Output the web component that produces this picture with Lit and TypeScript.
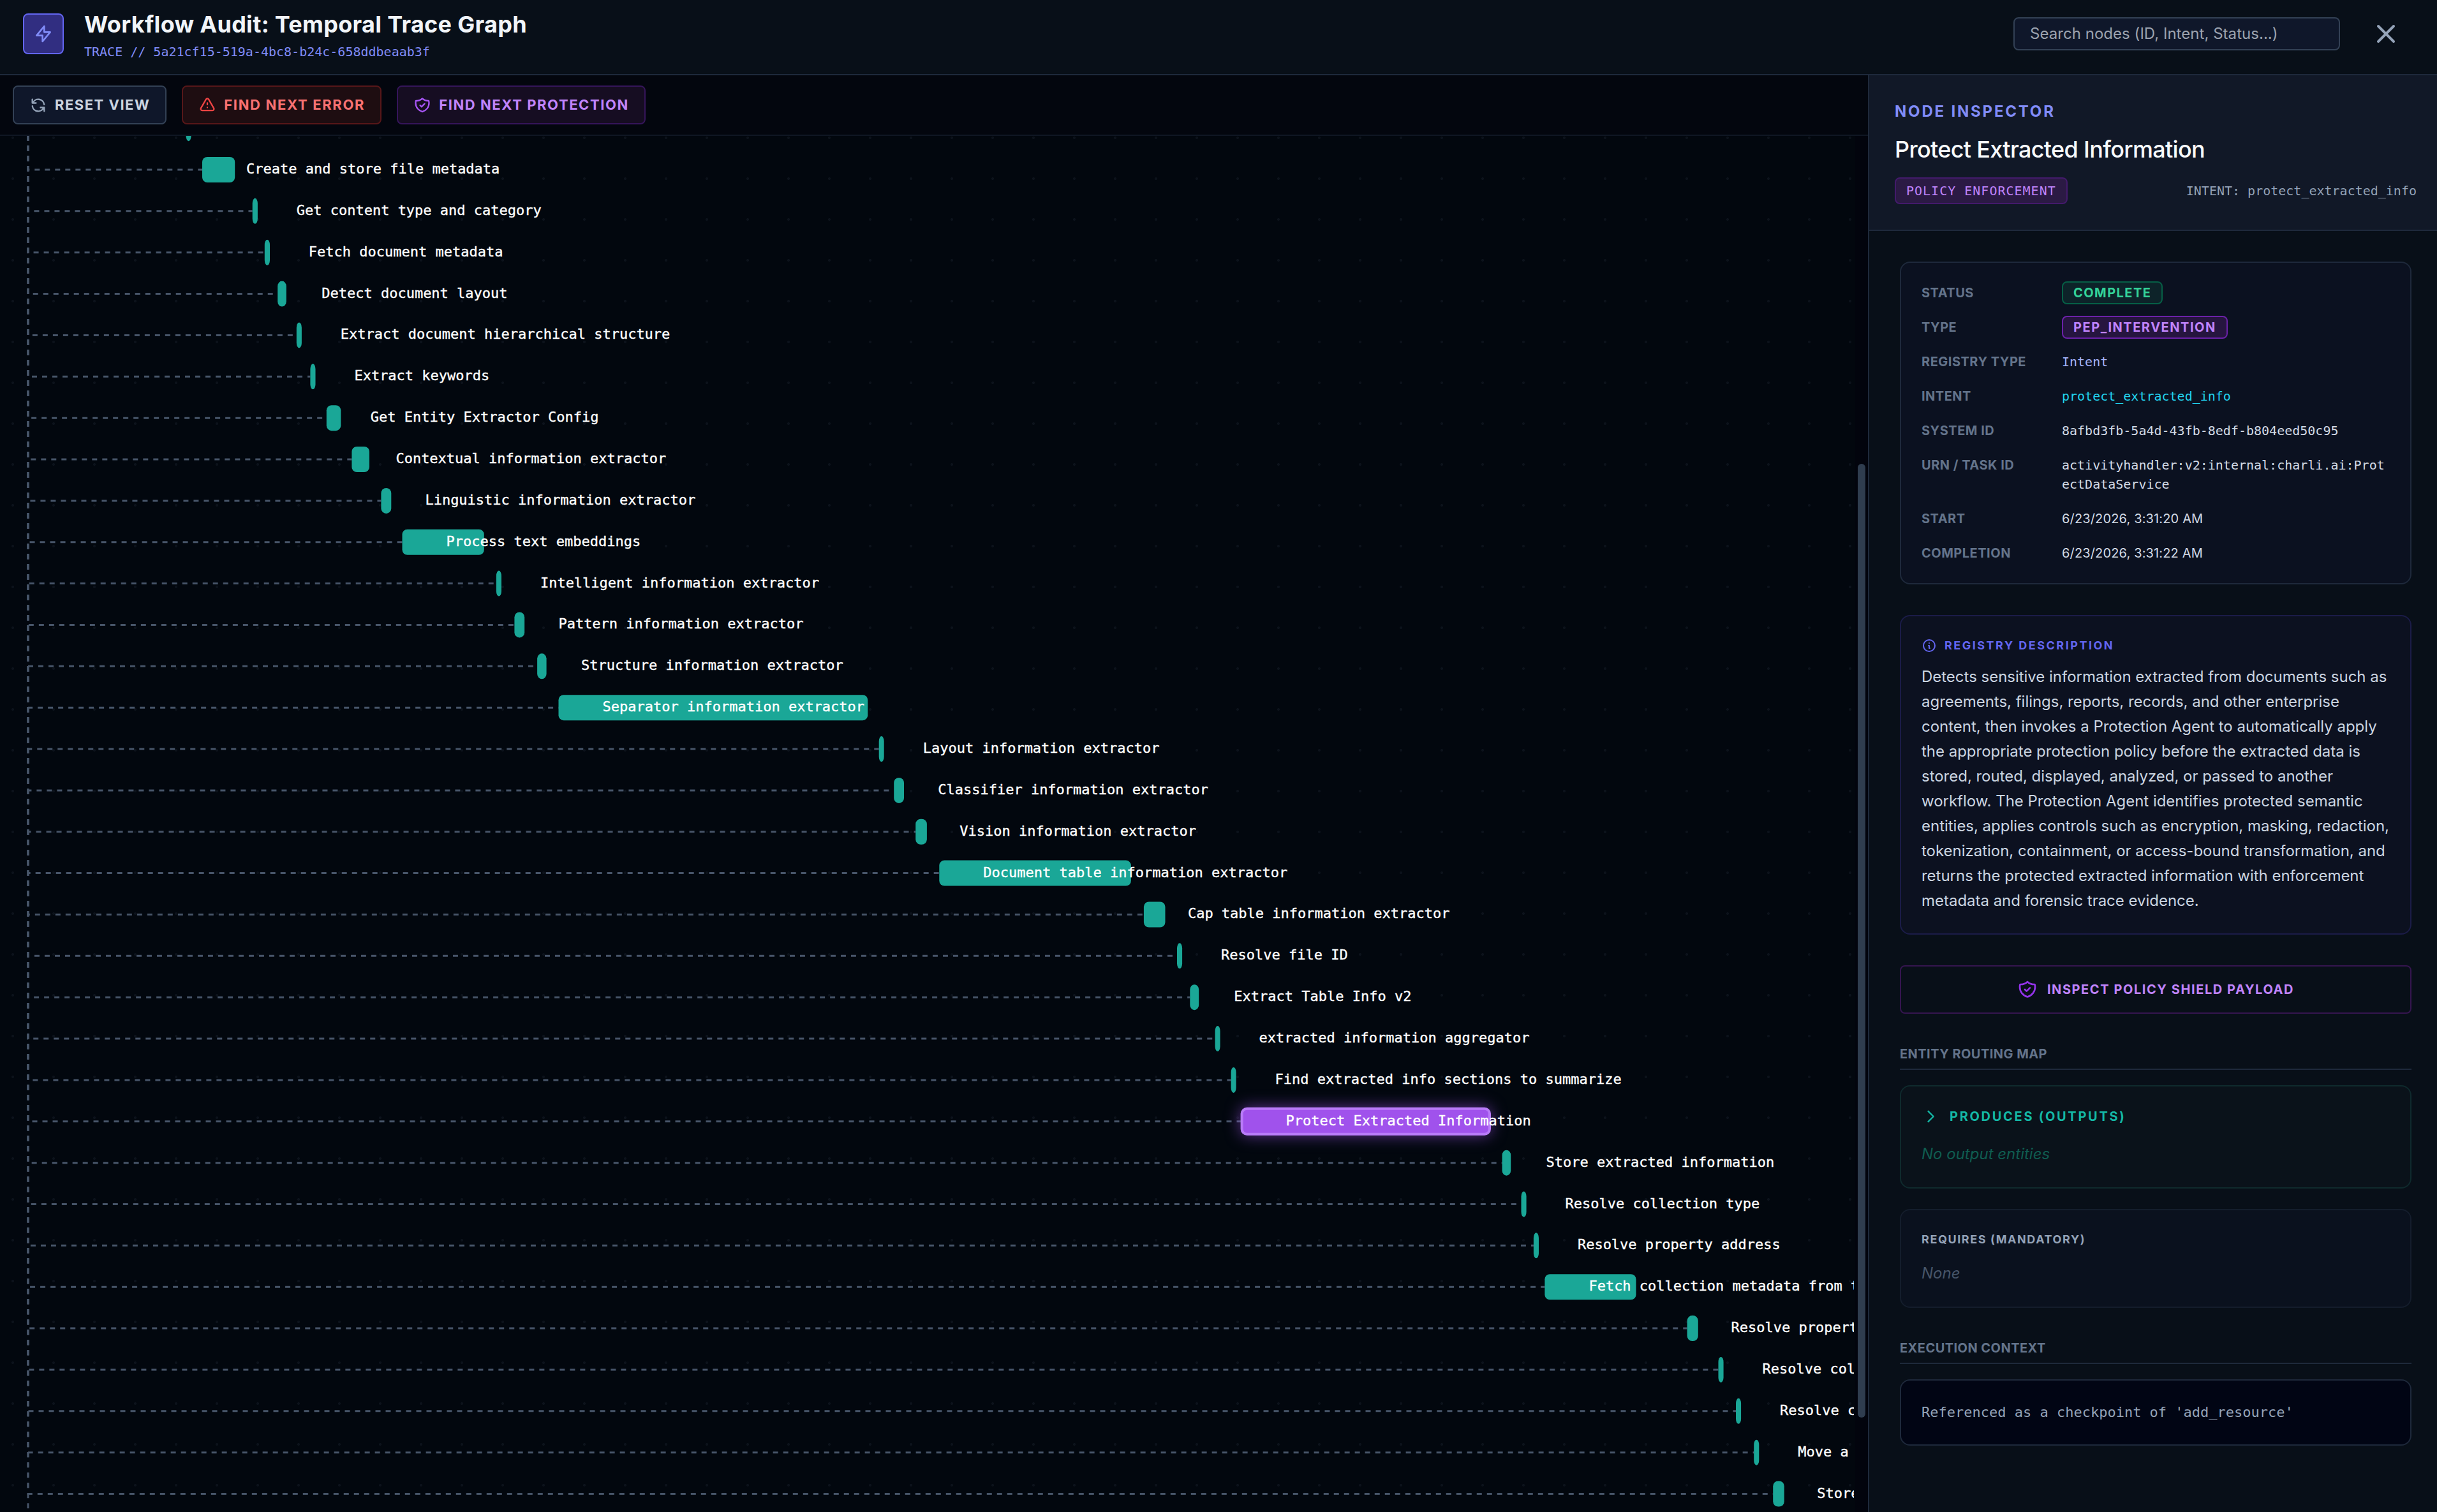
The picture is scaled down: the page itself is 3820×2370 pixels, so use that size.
import { LitElement, html, svg, css } from "lit";
import { customElement } from "lit/decorators.js";

const PATHS = {
  bolt: "M13 10V3L4 14h7v7l9-11h-7z",
  close: "M6 18L18 6M6 6l12 12",
  refresh:
    "M4 4v5h.582m15.356 2A8.001 8.001 0 004.582 9m0 0H9m11 11v-5h-.581m0 0a8.003 8.003 0 01-15.357-2m15.357 2H15",
  warning:
    "M12 9v2m0 4h.01m-6.938 4h13.856c1.54 0 2.502-1.667 1.732-3L13.732 4c-.77-1.333-2.694-1.333-3.464 0L3.34 16c-.77 1.333.192 3 1.732 3z",
  shield:
    "M9 12l2 2 4-4m5.618-4.016A11.955 11.955 0 0112 2.944a11.955 11.955 0 01-8.618 3.04A12.02 12.02 0 003 9c0 5.591 3.824 10.29 9 11.622 5.176-1.332 9-6.03 9-11.622 0-1.042-.133-2.052-.382-3.016z",
  info: "M13 16h-1v-4h-1m1-4h.01M21 12a9 9 0 11-18 0 9 9 0 0118 0z",
  chevron: "M9 5l7 7-7 7",
};

const icon = (name: keyof typeof PATHS, size: number, cls = "") => html`
  <svg class="icon ${cls}" width=${size} height=${size} viewBox="0 0 24 24">
    <path d=${PATHS[name]} />
  </svg>
`;

interface TraceNode {
  label: string;
  start: number;
  end: number;
  selected?: boolean;
}

/* Nodes in execution order; start and end are canvas x positions. */
const NODES: TraceNode[] = [
  { label: "", start: 291.6, end: 299.6 },
  { label: "Create and store file metadata", start: 317, end: 368.2 },
  { label: "Get content type and category", start: 395.7, end: 403.9 },
  { label: "Fetch document metadata", start: 414.8, end: 423 },
  { label: "Detect document layout", start: 435.2, end: 448.8 },
  { label: "Extract document hierarchical structure", start: 464.8, end: 472.9 },
  { label: "Extract keywords", start: 486.4, end: 494.5 },
  { label: "Get Entity Extractor Config", start: 511.8, end: 534.3 },
  { label: "Contextual information extractor", start: 551.4, end: 579 },
  { label: "Linguistic information extractor", start: 597.4, end: 613.3 },
  { label: "Process text embeddings", start: 630.5, end: 758.8 },
  { label: "Intelligent information extractor", start: 777.9, end: 786 },
  { label: "Pattern information extractor", start: 806.4, end: 822.2 },
  { label: "Structure information extractor", start: 842.1, end: 856.6 },
  { label: "Separator information extractor", start: 875.5, end: 1360.2 },
  { label: "Layout information extractor", start: 1377.7, end: 1385.7 },
  { label: "Classifier information extractor", start: 1401.2, end: 1417 },
  { label: "Vision information extractor", start: 1435.2, end: 1452.9 },
  { label: "Document table information extractor", start: 1472.3, end: 1772.9 },
  { label: "Cap table information extractor", start: 1792.9, end: 1826.5 },
  { label: "Resolve file ID", start: 1845, end: 1853.1 },
  { label: "Extract Table Info v2", start: 1865.3, end: 1879.2 },
  { label: "extracted information aggregator", start: 1904.6, end: 1912.6 },
  { label: "Find extracted info sections to summarize", start: 1929.6, end: 1937.6 },
  { label: "Protect Extracted Information", start: 1946.6, end: 2335, selected: true },
  { label: "Store extracted information", start: 2354.6, end: 2368.2 },
  { label: "Resolve collection type", start: 2384.5, end: 2392.6 },
  { label: "Resolve property address", start: 2403.9, end: 2412 },
  { label: "Fetch collection metadata from t", start: 2421.4, end: 2564.5 },
  { label: "Resolve propert", start: 2644.6, end: 2661.8 },
  { label: "Resolve col", start: 2693.5, end: 2701.6 },
  { label: "Resolve c", start: 2721, end: 2729.1 },
  { label: "Move a", start: 2749.2, end: 2757.3 },
  { label: "Store", start: 2779.2, end: 2796.8 },
];

const ROW_PITCH = 64.86;
const FIRST_ROW_Y = 201.14;
const ROOT_X = 44;
const ROOT_Y = 196.3;
const BAR_HEIGHT = 40;

@customElement("trace-canvas")
export class TraceCanvas extends LitElement {
  static styles = css`
    :host {
      display: flex;
      flex: 1;
      min-height: 0;
      background: #02070e;
    }
    .viewport {
      flex: 1;
      min-width: 0;
      background-image: radial-gradient(circle, #0c121b 1.7px, transparent 2.3px);
      background-size: 64px 64px;
      background-position: -12px -29px;
    }
    .graph {
      display: block;
      width: 2906px;
      height: 2157px;
      overflow: hidden;
    }
    .edge {
      fill: none;
      stroke: #475569;
      stroke-width: 3;
      stroke-dasharray: 8 8;
    }
    .bar {
      fill: #1aa797;
    }
    .bar.selected {
      fill: #a052ec;
      stroke: #b97bf8;
      stroke-width: 4;
      filter: drop-shadow(0 0 12px rgba(168, 85, 247, 0.55));
    }
    .label {
      fill: #ffffff;
      stroke: #ffffff;
      stroke-width: 0.35;
      font: 22px "DejaVu Sans Mono", monospace;
    }
    .scroll {
      width: 12px;
      padding: 0 4px;
      background: #02040d;
      display: flex;
      flex-direction: column;
    }
    .above {
      height: 514px;
    }
    .thumb {
      height: 1495px;
      border-radius: 6px;
      background: #2f3d4f;
    }
  `;

  private edge(n: TraceNode, i: number) {
    const y = FIRST_ROW_Y + i * ROW_PITCH;
    return svg`<path class="edge" d="M${ROOT_X} ${ROOT_Y}V${y.toFixed(2)}H${n.start}" />`;
  }

  private node(n: TraceNode, i: number) {
    const y = FIRST_ROW_Y + i * ROW_PITCH;
    return svg`
      <rect class="bar ${n.selected ? "selected" : ""}" x=${n.start} y=${(y - BAR_HEIGHT / 2).toFixed(2)}
        width=${(n.end - n.start).toFixed(1)} height=${BAR_HEIGHT} rx="8" />
      <text class="label" x=${(n.start + 69).toFixed(1)} y=${(y + 6).toFixed(2)}>${n.label}</text>`;
  }

  render() {
    return html`
      <div class="viewport">
        <svg class="graph" viewBox="0 213 2906 2157">
          ${NODES.map((n, i) => this.edge(n, i))}
          <path class="edge" d="M${ROOT_X} ${ROOT_Y}V2380" />
          ${NODES.map((n, i) => this.node(n, i))}
        </svg>
      </div>
      <div class="scroll"><div class="above"></div><div class="thumb"></div></div>
    `;
  }
}

const iconStyles = css`
  .icon {
    display: block;
    flex: none;
    fill: none;
    stroke: currentColor;
    stroke-width: 2;
    stroke-linecap: round;
    stroke-linejoin: round;
  }
`;

@customElement("node-inspector")
export class NodeInspector extends LitElement {
  static styles = [
    iconStyles,
    css`
      :host {
        display: flex;
        flex-direction: column;
        box-sizing: border-box;
        width: 892px;
        border-left: 2px solid #1e293b;
        background: #080f18;
        font: 20px/30px Inter, sans-serif;
      }
      .mono {
        font-family: "DejaVu Sans Mono", monospace;
      }
      .top {
        padding: 41px 32px 40px 40px;
        border-bottom: 2px solid #1e293b;
        background: #111827;
      }
      .kicker {
        font-size: 24px;
        line-height: 32px;
        font-weight: 700;
        letter-spacing: 2.8px;
        color: #818cf8;
      }
      .title {
        margin: 16px 0 17px;
        font-size: 36px;
        line-height: 54px;
        font-weight: 500;
        letter-spacing: -0.68px;
        color: #f8fafc;
      }
      .meta {
        display: flex;
        justify-content: space-between;
        align-items: center;
        color: #94a3b8;
      }
      .policy {
        padding: 4px 16px;
        border: 2px solid #431a6b;
        border-radius: 8px;
        background: #2b1a44;
        color: #c084fc;
        letter-spacing: 1px;
      }
      .body {
        display: flex;
        flex-direction: column;
        padding: 48px 40px 0 48px;
      }
      .card {
        padding: 32px;
        border: 2px solid #1e293b;
        border-radius: 16px;
        background: #0b1120;
      }
      .details {
        display: grid;
        grid-template-columns: 220px 1fr;
        row-gap: 24px;
      }
      .key {
        font-weight: 700;
        letter-spacing: 0.5px;
        color: #64748b;
      }
      .value {
        color: #d3dbe6;
        word-break: break-all;
      }
      .date {
        letter-spacing: 0.15px;
      }
      .registry-type {
        color: #a5b4fc;
      }
      .intent {
        color: #22d3ee;
      }
      .cell {
        display: flex;
        align-items: center;
        height: 30px;
      }
      .tag {
        padding: 1px 16px;
        border: 2px solid #065f46;
        border-radius: 8px;
        background: #0d2329;
        color: #34d399;
        font-weight: 700;
        letter-spacing: 1.45px;
      }
      .tag.pep {
        border-color: #6b21a8;
        background: #26153f;
        color: #c084fc;
        letter-spacing: 1.53px;
      }
      .description {
        margin-top: 48px;
        border-color: #1b1c48;
        background: #0c1120;
      }
      .card-head {
        display: flex;
        align-items: center;
        gap: 12px;
        height: 27px;
        margin-bottom: 16px;
        font-size: 18px;
        font-weight: 700;
        letter-spacing: 2.5px;
        color: #6366f1;
      }
      .copy {
        margin: 0 -8px 0 0;
        font-size: 24px;
        line-height: 39px;
        letter-spacing: -0.02px;
        color: #cbd5e1;
      }
      .inspect {
        display: flex;
        justify-content: center;
        align-items: center;
        gap: 15px;
        height: 72px;
        margin-top: 48px;
        border: 2px solid #35154f;
        border-radius: 8px;
        font-weight: 700;
        letter-spacing: 1.57px;
        color: #c084fc;
      }
      .inspect .icon {
        color: #9333ea;
      }
      .section {
        margin: 48px 0 24px;
        padding-bottom: 8px;
        border-bottom: 2px solid #1e293b;
        font-weight: 700;
        letter-spacing: 0.45px;
        color: #64748b;
      }
      .produces {
        padding-bottom: 33px;
        border-color: #0f2a2d;
        background: #0a121a;
      }
      .produces .toggle {
        display: flex;
        align-items: center;
        gap: 16px;
        margin-bottom: 24px;
        font-weight: 700;
        letter-spacing: 2.7px;
        color: #14b8a6;
      }
      .empty {
        font-size: 24px;
        line-height: 39px;
        font-style: italic;
        color: #475569;
      }
      .produces .empty {
        color: #0f5c50;
      }
      .requires {
        margin-top: 32px;
        padding-bottom: 33px;
        border-color: #141d2c;
        background: #0a111e;
      }
      .requires .name {
        margin-bottom: 20px;
        font-size: 18px;
        line-height: 27px;
        font-weight: 700;
        letter-spacing: 1.58px;
        color: #94a3b8;
      }
      .context {
        background: #010514;
        font-size: 22px;
        line-height: 36px;
        color: #94a3b8;
      }
    `,
  ];

  render() {
    return html`
      <div class="top">
        <div class="kicker">NODE INSPECTOR</div>
        <div class="title">Protect Extracted Information</div>
        <div class="meta mono">
          <span class="policy">POLICY ENFORCEMENT</span>
          <span>INTENT: protect_extracted_info</span>
        </div>
      </div>
      <div class="body">
        <div class="card details">
          <div class="key">STATUS</div>
          <div class="cell"><span class="tag">COMPLETE</span></div>
          <div class="key">TYPE</div>
          <div class="cell"><span class="tag pep">PEP_INTERVENTION</span></div>
          <div class="key">REGISTRY TYPE</div>
          <div class="value mono registry-type">Intent</div>
          <div class="key">INTENT</div>
          <div class="value mono intent">protect_extracted_info</div>
          <div class="key">SYSTEM ID</div>
          <div class="value mono">8afbd3fb-5a4d-43fb-8edf-b804eed50c95</div>
          <div class="key">URN / TASK ID</div>
          <div class="value mono">activityhandler:v2:internal:charli.ai:ProtectDataService</div>
          <div class="key">START</div>
          <div class="value date">6/23/2026, 3:31:20 AM</div>
          <div class="key">COMPLETION</div>
          <div class="value date">6/23/2026, 3:31:22 AM</div>
        </div>
        <div class="card description">
          <div class="card-head">${icon("info", 24)}<span>REGISTRY DESCRIPTION</span></div>
          <p class="copy">
            Detects sensitive information extracted from documents such as agreements, filings,
            reports, records, and other enterprise content, then invokes a Protection Agent to
            automatically apply the appropriate protection policy before the extracted data is
            stored, routed, displayed, analyzed, or passed to another workflow. The Protection Agent
            identifies protected semantic entities, applies controls such as encryption, masking,
            redaction, tokenization, containment, or access-bound transformation, and returns the
            protected extracted information with enforcement metadata and forensic trace evidence.
          </p>
        </div>
        <div class="inspect">${icon("shield", 32)}<span>INSPECT POLICY SHIELD PAYLOAD</span></div>
        <div class="section">ENTITY ROUTING MAP</div>
        <div class="card produces">
          <div class="toggle">${icon("chevron", 28)}<span>PRODUCES (OUTPUTS)</span></div>
          <div class="empty">No output entities</div>
        </div>
        <div class="card requires">
          <div class="name">REQUIRES (MANDATORY)</div>
          <div class="empty">None</div>
        </div>
        <div class="section">EXECUTION CONTEXT</div>
        <div class="card context mono">Referenced as a checkpoint of 'add_resource'</div>
      </div>
    `;
  }
}

@customElement("app-root")
export class AppRoot extends LitElement {
  static styles = [
    iconStyles,
    css`
      :host {
        display: flex;
        flex-direction: column;
        height: 100vh;
        overflow: hidden;
        background: #02070e;
        font-family: Inter, sans-serif;
      }
      .header {
        display: flex;
        align-items: center;
        box-sizing: border-box;
        height: 118px;
        padding: 0 56px 10px 36px;
        border-bottom: 2px solid #1e293b;
        background: #080f18;
      }
      .logo {
        display: flex;
        justify-content: center;
        align-items: center;
        width: 60px;
        height: 60px;
        margin-right: 32px;
        border: 2px solid #6366f1;
        border-radius: 8px;
        background: #312e81;
        color: #818cf8;
      }
      .heading {
        flex: 1;
        padding-top: 3px;
      }
      .name {
        margin: 0 0 3px;
        font-size: 36px;
        line-height: 50px;
        font-weight: 700;
        letter-spacing: 0.3px;
        color: #f1f5f9;
      }
      .trace {
        font: 20px/30px "DejaVu Sans Mono", monospace;
        color: #818cf8;
      }
      .search {
        box-sizing: border-box;
        width: 512px;
        height: 52px;
        margin-right: 48px;
        padding: 0 24px;
        border: 2px solid #334155;
        border-radius: 8px;
        background: #0f172a;
        font-size: 24px;
        line-height: 48px;
        letter-spacing: 0.04px;
        color: #9ca3af;
      }
      .close {
        color: #94a3b8;
      }
      .main {
        display: flex;
        flex: 1;
        min-height: 0;
      }
      .left {
        display: flex;
        flex: 1;
        flex-direction: column;
        min-width: 0;
      }
      .toolbar {
        display: flex;
        gap: 24px;
        padding: 16px 20px;
        border-bottom: 2px solid #0f1623;
        background: #03060e;
      }
      .button {
        display: flex;
        align-items: center;
        gap: 12px;
        padding: 12px 24px;
        border: 2px solid #334155;
        border-radius: 8px;
        background: #0f172a;
        font-size: 22px;
        line-height: 33px;
        font-weight: 700;
        letter-spacing: 1.5px;
        color: #cbd5e1;
      }
      .muted {
        color: #94a3b8;
      }
      .button.error {
        border-color: #571719;
        background: #1e0d11;
        color: #f87171;
        letter-spacing: 1.66px;
      }
      .red {
        color: #ef4444;
      }
      .button.protection {
        border-color: #35155a;
        background: #160d22;
        color: #c084fc;
        letter-spacing: 1.57px;
      }
      .purple {
        color: #a855f7;
      }
    `,
  ];

  render() {
    return html`
      <header class="header">
        <div class="logo">${icon("bolt", 32)}</div>
        <div class="heading">
          <h1 class="name">Workflow Audit: Temporal Trace Graph</h1>
          <div class="trace">TRACE // 5a21cf15-519a-4bc8-b24c-658ddbeaab3f</div>
        </div>
        <div class="search">Search nodes (ID, Intent, Status...)</div>
        ${icon("close", 48, "close")}
      </header>
      <div class="main">
        <div class="left">
          <div class="toolbar">
            <div class="button">${icon("refresh", 28, "muted")}<span>RESET VIEW</span></div>
            <div class="button error">${icon("warning", 28, "red")}<span>FIND NEXT ERROR</span></div>
            <div class="button protection">
              ${icon("shield", 28, "purple")}<span>FIND NEXT PROTECTION</span>
            </div>
          </div>
          <trace-canvas></trace-canvas>
        </div>
        <node-inspector></node-inspector>
      </div>
    `;
  }
}
